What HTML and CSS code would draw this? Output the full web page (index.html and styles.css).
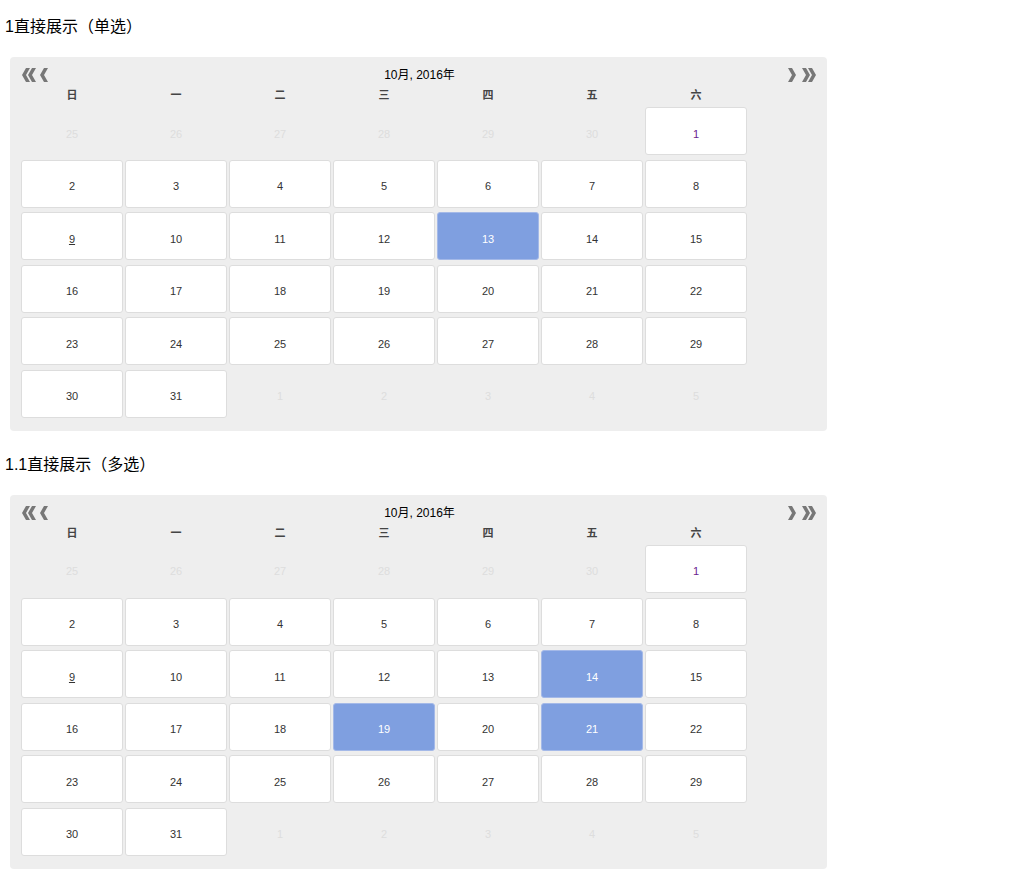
FILE: index.html
```html
<!DOCTYPE html>
<html>
	<head>
		<meta charset="utf-8" lang="zh-CN" />
		<title>日历 - 直接展示</title>

		<link rel="stylesheet" href="styles.css">
	</head>

	<body>
		<p class="demo-title">1直接展示（单选）</p>
		<div class="calendar">
			<div class="cal-head">
				<span class="cal-nav">
					<svg width="27" height="14" viewBox="0 0 27 14"><polygon points="8,0 4,0 0,7 4,14 8,14 4,7" /><polygon points="14,0 10,0 6,7 10,14 14,14 10,7" /><polygon points="26,0 22,0 18,7 22,14 26,14 22,7" /></svg>
				</span>
				<span class="cal-title">10月, 2016年</span>
				<span class="cal-nav cal-nav-right">
					<svg width="29" height="14" viewBox="0 0 29 14"><polygon points="0,0 4,0 8,7 4,14 0,14 4,7" /><polygon points="14,0 18,0 22,7 18,14 14,14 18,7" /><polygon points="20,0 24,0 28,7 24,14 20,14 24,7" /></svg>
				</span>
			</div>
			<div class="cal-week">
				<span>日</span><span>一</span><span>二</span><span>三</span><span>四</span><span>五</span><span>六</span>
			</div>
			<div class="cal-days">
				<span class="day other">25</span>
				<span class="day other">26</span>
				<span class="day other">27</span>
				<span class="day other">28</span>
				<span class="day other">29</span>
				<span class="day other">30</span>
				<span class="day visited">1</span>

				<span class="day">2</span>
				<span class="day">3</span>
				<span class="day">4</span>
				<span class="day">5</span>
				<span class="day">6</span>
				<span class="day">7</span>
				<span class="day">8</span>

				<span class="day today">9</span>
				<span class="day">10</span>
				<span class="day">11</span>
				<span class="day">12</span>
				<span class="day selected">13</span>
				<span class="day">14</span>
				<span class="day">15</span>

				<span class="day">16</span>
				<span class="day">17</span>
				<span class="day">18</span>
				<span class="day">19</span>
				<span class="day">20</span>
				<span class="day">21</span>
				<span class="day">22</span>

				<span class="day">23</span>
				<span class="day">24</span>
				<span class="day">25</span>
				<span class="day">26</span>
				<span class="day">27</span>
				<span class="day">28</span>
				<span class="day">29</span>

				<span class="day">30</span>
				<span class="day">31</span>
				<span class="day other">1</span>
				<span class="day other">2</span>
				<span class="day other">3</span>
				<span class="day other">4</span>
				<span class="day other">5</span>
			</div>
		</div>

		<p class="demo-title">1.1直接展示（多选）</p>
		<div class="calendar">
			<div class="cal-head">
				<span class="cal-nav">
					<svg width="27" height="14" viewBox="0 0 27 14"><polygon points="8,0 4,0 0,7 4,14 8,14 4,7" /><polygon points="14,0 10,0 6,7 10,14 14,14 10,7" /><polygon points="26,0 22,0 18,7 22,14 26,14 22,7" /></svg>
				</span>
				<span class="cal-title">10月, 2016年</span>
				<span class="cal-nav cal-nav-right">
					<svg width="29" height="14" viewBox="0 0 29 14"><polygon points="0,0 4,0 8,7 4,14 0,14 4,7" /><polygon points="14,0 18,0 22,7 18,14 14,14 18,7" /><polygon points="20,0 24,0 28,7 24,14 20,14 24,7" /></svg>
				</span>
			</div>
			<div class="cal-week">
				<span>日</span><span>一</span><span>二</span><span>三</span><span>四</span><span>五</span><span>六</span>
			</div>
			<div class="cal-days">
				<span class="day other">25</span>
				<span class="day other">26</span>
				<span class="day other">27</span>
				<span class="day other">28</span>
				<span class="day other">29</span>
				<span class="day other">30</span>
				<span class="day visited">1</span>

				<span class="day">2</span>
				<span class="day">3</span>
				<span class="day">4</span>
				<span class="day">5</span>
				<span class="day">6</span>
				<span class="day">7</span>
				<span class="day">8</span>

				<span class="day today">9</span>
				<span class="day">10</span>
				<span class="day">11</span>
				<span class="day">12</span>
				<span class="day">13</span>
				<span class="day selected">14</span>
				<span class="day">15</span>

				<span class="day">16</span>
				<span class="day">17</span>
				<span class="day">18</span>
				<span class="day selected">19</span>
				<span class="day">20</span>
				<span class="day selected">21</span>
				<span class="day">22</span>

				<span class="day">23</span>
				<span class="day">24</span>
				<span class="day">25</span>
				<span class="day">26</span>
				<span class="day">27</span>
				<span class="day">28</span>
				<span class="day">29</span>

				<span class="day">30</span>
				<span class="day">31</span>
				<span class="day other">1</span>
				<span class="day other">2</span>
				<span class="day other">3</span>
				<span class="day other">4</span>
				<span class="day other">5</span>
			</div>
		</div>
	</body>
</html>
```

FILE: styles.css
```css
body {
	color: #000;
	font-family: "Liberation Sans", "Noto Sans CJK SC", sans-serif;
	margin: 0;
	padding: 16px 5px 0;
}
.demo-title {
	font-size: 16px;
	line-height: 22px;
	margin: 0 0 19px;
}


/* Calendar */
.calendar {
	background: #eee;
	border-radius: 4px;
	box-sizing: border-box;
	margin: 0 0 23px 5px;
	padding: 9px 0 13px;
	width: 817px;
}
.cal-head {
	align-items: center;
	display: grid;
	grid-template-columns: 1fr auto 1fr;
	height: 18px;
	padding: 0 10px 0 12px;
}
.cal-nav svg {
	display: block;
	fill: #777;
}
.cal-nav-right { justify-self: end; }
.cal-title {
	font-size: 12px;
	line-height: 18px;
}
.cal-week,
.cal-days {
	display: grid;
	grid-template-columns: repeat(7, 102px);
	column-gap: 2px;
	padding-left: 11px;
}
.cal-week {
	color: #444;
	font-size: 11px;
	font-weight: bold;
	line-height: 20px;
	margin: 1px 0 2px;
	text-align: center;
}
.cal-days { row-gap: 4.6px; }
.day {
	align-items: center;
	background: #fff;
	border: 1px solid #ddd;
	border-radius: 3px;
	box-sizing: border-box;
	color: #333;
	display: flex;
	font-size: 11px;
	height: 48px;
	justify-content: center;
	padding-top: 5px;
}
.day.other {
	background: none;
	border-color: transparent;
	color: #ddd;
}
.day.visited { color: #6a1b8e; }
.day.today { text-decoration: underline; }
.day.selected {
	background: #7f9fe0;
	border-color: #a4b9e8;
	color: #fff;
}
```
